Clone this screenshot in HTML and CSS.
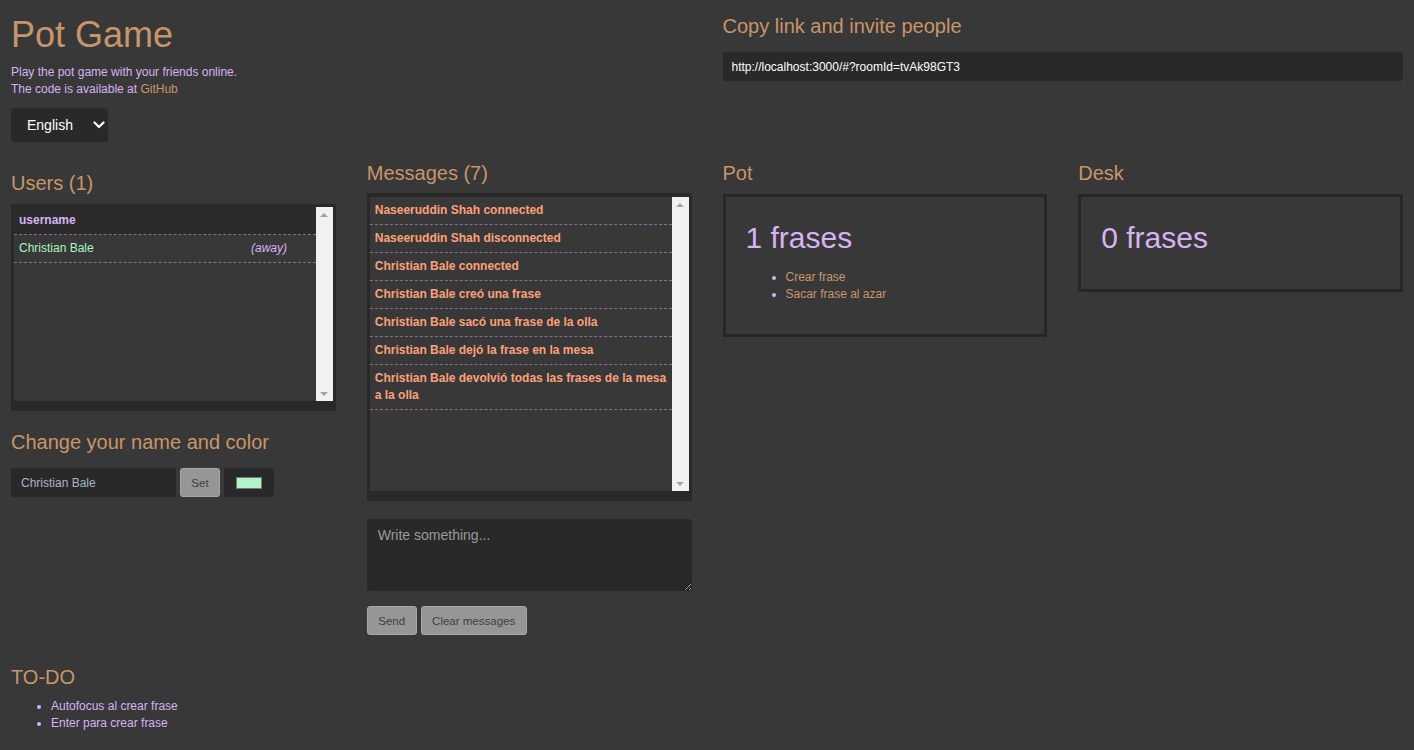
FILE: index.html
```html
<!DOCTYPE html>
<html lang="en">
<head>
<meta charset="utf-8">
<title>Pot Game</title>
<link rel="stylesheet" href="styles.css">
</head>
<body>
<header class="top">
  <div class="intro">
    <h1 class="title">Pot Game</h1>
    <p class="desc">Play the pot game with your friends online.<br>The code is available at <a class="link" href="#">GitHub</a></p>
    <div class="select-wrap">
      <select class="lang"><option>English</option><option>Español</option></select>
      <svg class="chev" width="12" height="8" viewBox="0 0 12 8"><path d="M1.5 1.5 L6 6 L10.5 1.5" fill="none" stroke="#ffffff" stroke-width="2.2" stroke-linecap="round" stroke-linejoin="round"/></svg>
    </div>
  </div>
  <div class="invite">
    <h2 class="heading">Copy link and invite people</h2>
    <input class="url" type="text" value="http://localhost:3000/#?roomId=tvAk98GT3" readonly>
  </div>
</header>

<main class="main">
  <section class="col col-users">
    <h2 class="heading">Users (1)</h2>
    <div class="frame users-frame">
      <div class="scroll-area">
        <div class="list">
          <div class="urow uhead"><span>username</span><span></span></div>
          <div class="urow"><span class="uname">Christian Bale</span><span class="away">(away)</span></div>
        </div>
        <div class="sbar"><span class="arrow up"></span><span class="arrow down"></span></div>
      </div>
    </div>
    <h2 class="heading change">Change your name and color</h2>
    <div class="name-form">
      <input class="name-input" type="text" value="Christian Bale">
      <button class="btn set">Set</button>
      <div class="color-pick"><span class="swatch"></span></div>
    </div>
  </section>

  <section class="col col-messages">
    <h2 class="heading">Messages (7)</h2>
    <div class="frame msg-frame">
      <div class="scroll-area">
        <div class="list">
          <div class="msg">Naseeruddin Shah connected</div>
          <div class="msg">Naseeruddin Shah disconnected</div>
          <div class="msg">Christian Bale connected</div>
          <div class="msg">Christian Bale creó una frase</div>
          <div class="msg">Christian Bale sacó una frase de la olla</div>
          <div class="msg">Christian Bale dejó la frase en la mesa</div>
          <div class="msg">Christian Bale devolvió todas las frases de la mesa a la olla</div>
        </div>
        <div class="sbar"><span class="arrow up"></span><span class="arrow down"></span></div>
      </div>
    </div>
    <textarea class="write" placeholder="Write something..."></textarea>
    <div class="actions">
      <button class="btn">Send</button>
      <button class="btn">Clear messages</button>
    </div>
  </section>

  <section class="col">
    <h2 class="heading">Pot</h2>
    <div class="box">
      <h3 class="count">1 frases</h3>
      <ul class="opts">
        <li>Crear frase</li>
        <li>Sacar frase al azar</li>
      </ul>
    </div>
  </section>

  <section class="col">
    <h2 class="heading">Desk</h2>
    <div class="box">
      <h3 class="count">0 frases</h3>
    </div>
  </section>
</main>

<section class="todo">
  <h2 class="heading">TO-DO</h2>
  <ul class="todo-list">
    <li>Autofocus al crear frase</li>
    <li>Enter para crear frase</li>
  </ul>
</section>
</body>
</html>
```

FILE: styles.css
```css
* { box-sizing: border-box; }

html, body {
  margin: 0;
  background: #383838;
}

body {
  padding: 0 11px;
  font-family: "Liberation Sans", Arial, sans-serif;
  font-size: 12px;
  color: #d6b3f4;
}

.top {
  display: grid;
  grid-template-columns: repeat(4, 1fr);
  column-gap: 31px;
}

.intro { grid-column: 1 / span 2; }
.invite { grid-column: 3 / span 2; padding-top: 15px; }

.title {
  margin: 14px 0 0;
  font-size: 36px;
  line-height: 41px;
  font-weight: normal;
  color: #c8956a;
}

.desc {
  margin: 9px 0 0;
  line-height: 17px;
  color: #d6b3f4;
}

.link { color: #c8956a; text-decoration: none; }

.select-wrap {
  position: relative;
  width: 97px;
  height: 34px;
  margin-top: 10px;
}

.lang {
  appearance: none;
  -webkit-appearance: none;
  width: 97px;
  height: 34px;
  border: none;
  border-radius: 4px;
  background: #292929;
  color: #ffffff;
  font-family: "Liberation Sans", Arial, sans-serif;
  font-size: 14px;
  padding: 0 0 0 16px;
  outline: none;
}

.chev {
  position: absolute;
  right: 3px;
  top: 13px;
  pointer-events: none;
}

.heading {
  margin: 0;
  font-size: 20px;
  line-height: 23px;
  font-weight: normal;
  color: #c8956a;
}

.url {
  display: block;
  width: 100%;
  height: 29px;
  margin-top: 14px;
  border: none;
  border-radius: 3px;
  background: #292929;
  color: #ffffff;
  font-family: "Liberation Sans", Arial, sans-serif;
  font-size: 12px;
  padding: 0 9px;
  outline: none;
}

.main {
  display: grid;
  grid-template-columns: repeat(4, 1fr);
  column-gap: 31px;
  align-items: start;
  margin-top: 20px;
}

.col-users { padding-top: 10px; }

.col > .heading { margin-bottom: 9px; }
.col-messages > .heading { margin-bottom: 8px; }

.frame {
  background: #292929;
  padding: 3px 3px 10px;
}

.users-frame { height: 207px; }
.msg-frame { height: 308px; padding-top: 4px; }

.scroll-area {
  display: flex;
  height: 100%;
  background: #383838;
}

.list {
  flex: 1;
  min-width: 0;
}

.sbar {
  width: 17px;
  background: #f1f1f1;
  display: flex;
  flex-direction: column;
  justify-content: space-between;
  align-items: center;
  padding: 6px 0 5px;
}

.arrow {
  width: 0;
  height: 0;
  border-left: 4px solid transparent;
  border-right: 4px solid transparent;
}
.arrow.up { border-bottom: 4px solid #a3a3a3; }
.arrow.down { border-top: 4px solid #a3a3a3; }

.urow {
  display: grid;
  grid-template-columns: 232px 1fr;
  padding: 5px 5px;
  line-height: 17px;
  border-bottom: 1px dashed #8a6b95;
}

.uhead {
  background: #2b2b2b;
  font-weight: bold;
  color: #d6b3f4;
}

.uname { color: #adf5c0; }
.away { font-style: italic; color: #d6b3f4; }

.msg {
  padding: 5px 5px;
  line-height: 17px;
  font-weight: bold;
  color: #ffa07a;
  border-bottom: 1px dashed #8a6b95;
}

.col > .change { margin-top: 20px; margin-bottom: 14px; }

.name-form {
  display: flex;
  gap: 4px;
}

.name-input {
  width: 165px;
  height: 29px;
  border: none;
  border-radius: 3px;
  background: #292929;
  color: #a9b3c2;
  font-family: "Liberation Sans", Arial, sans-serif;
  font-size: 12px;
  padding: 0 10px;
  outline: none;
}

.btn {
  height: 29px;
  padding: 0 10.5px;
  border: 1px solid #a8a8a8;
  border-radius: 3px;
  background: #969696;
  color: #404040;
  font-family: "Liberation Sans", Arial, sans-serif;
  font-size: 11.5px;
}

.set { width: 40px; padding: 0; }

.color-pick {
  width: 50px;
  height: 29px;
  border-radius: 3px;
  background: #292929;
  display: flex;
  align-items: center;
  justify-content: center;
}

.swatch {
  width: 26px;
  height: 12px;
  background: #b0f5c8;
  border: 1px solid #777777;
}

.write {
  display: block;
  width: 100%;
  height: 72px;
  margin-top: 18px;
  border: none;
  border-radius: 3px;
  background: #292929;
  color: #dddddd;
  font-family: "Liberation Sans", Arial, sans-serif;
  font-size: 14px;
  padding: 8px 11px;
  outline: none;
  resize: vertical;
}
.write::placeholder { color: #9a9a9a; }

.actions {
  display: flex;
  gap: 4px;
  margin-top: 15px;
}

.box {
  border: 3px solid #262626;
  padding: 24px 20px 20px;
}

.count {
  margin: 0 0 14px;
  font-size: 30px;
  line-height: 34px;
  font-weight: normal;
  color: #d6b3f4;
}

.opts {
  margin: 0 0 11px;
  padding-left: 40px;
  line-height: 17px;
  color: #c8956a;
}
.opts li::marker { color: #d6b3f4; }

.todo { margin-top: 31px; }

.todo-list {
  margin: 9px 0 0;
  padding-left: 40px;
  line-height: 17px;
  color: #d6b3f4;
}
```
